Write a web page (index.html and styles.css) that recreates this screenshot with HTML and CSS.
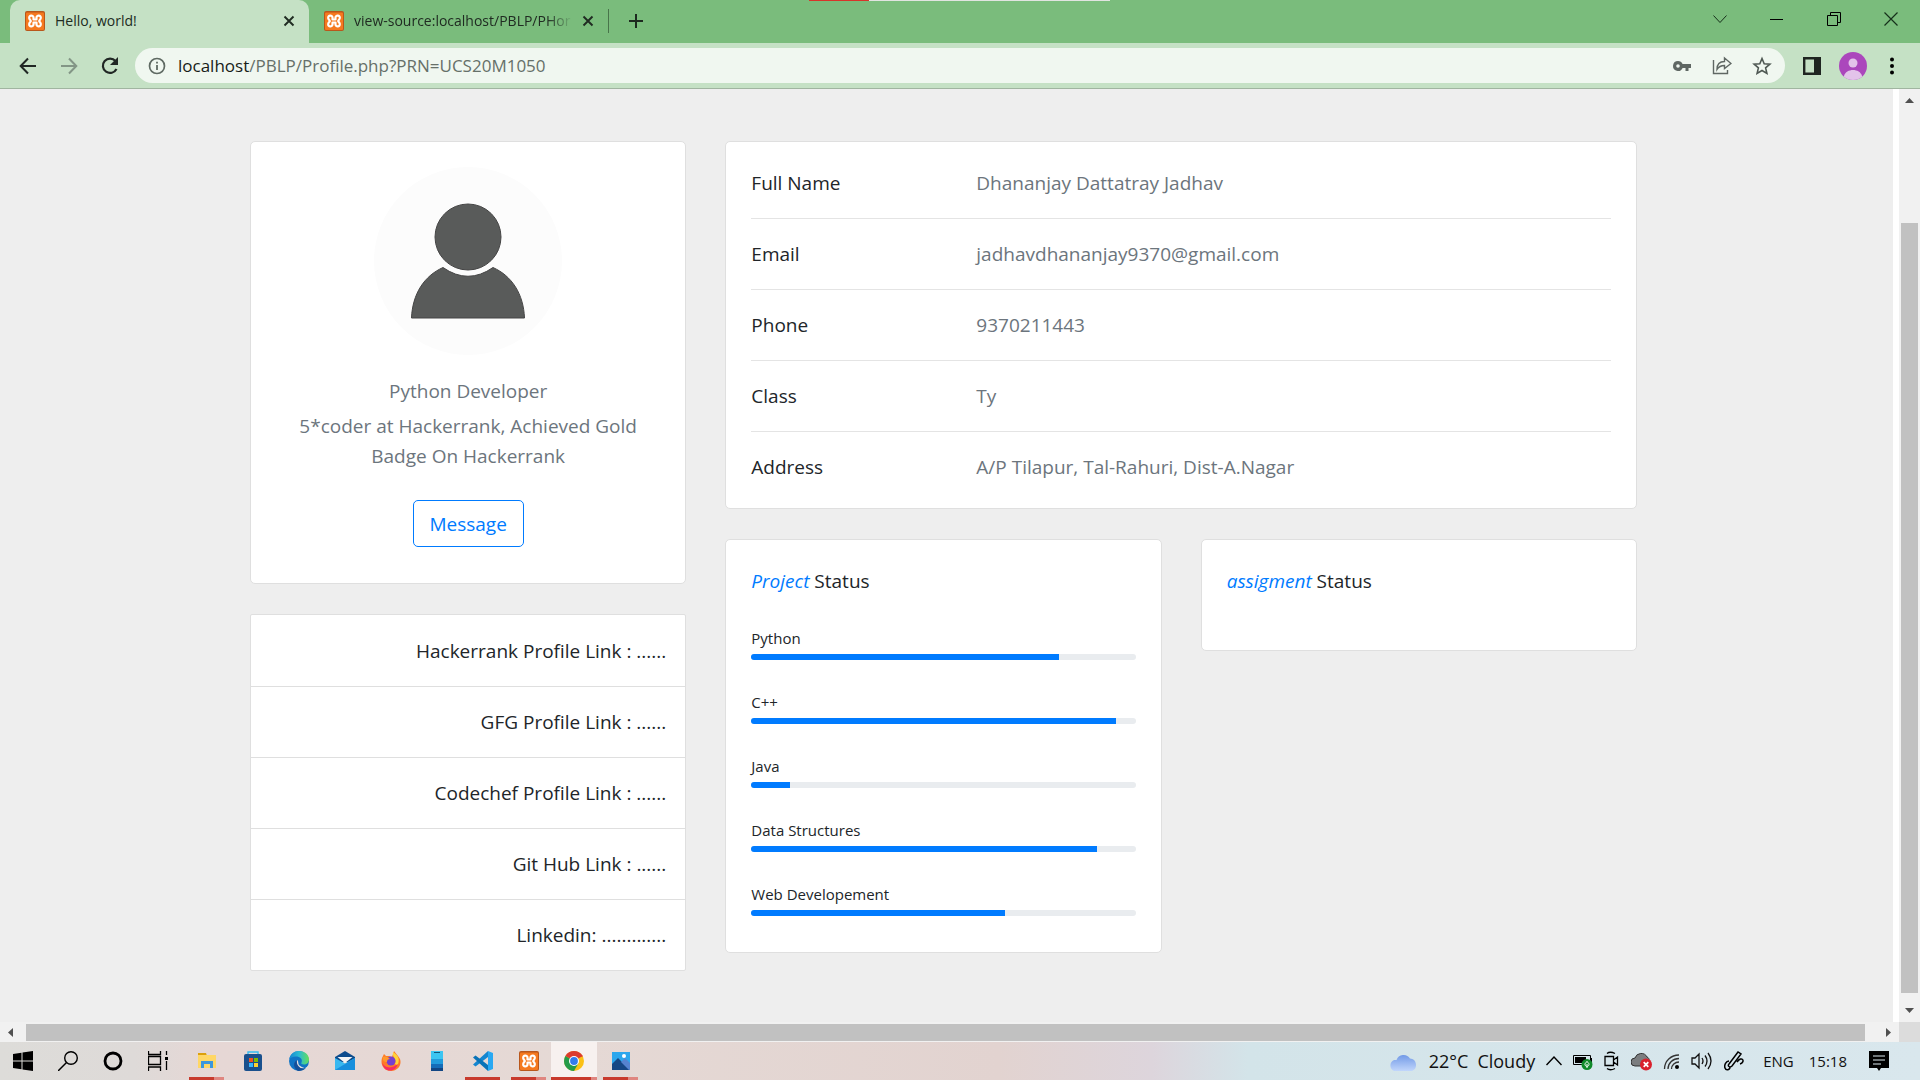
FILE: index.html
```html
<!DOCTYPE html>
<html lang="en">
<head>
<meta charset="utf-8">
<title>Hello, world!</title>
<link rel="stylesheet" href="styles.css">
</head>
<body>
<svg class="defs" aria-hidden="true">
  <symbol id="xampp" viewBox="0 0 20 20">
    <rect width="20" height="20" rx="2" fill="#b9571c"/><rect x="1" y="1.500" width="18" height="17.500" rx="1" fill="#f5791f"/>
    <path d="M8.500 8.500V6.500C8.500 3.800 3.800 4 4.200 7C4.400 8.800 5.800 9 5.800 10S4.400 11.200 4.200 13C3.800 16 8.500 16.200 8.500 13.500V11.500H11.500V13.500C11.500 16.200 16.200 16 15.800 13C15.600 11.200 14.200 11 14.200 10S15.600 8.800 15.800 7C16.200 4 11.500 3.800 11.500 6.500V8.500Z" fill="none" stroke="#fff" stroke-width="2.200" stroke-linejoin="round"/>
  </symbol>
  <symbol id="cross" viewBox="0 0 12 12"><path d="M1.500 1.500l9 9M10.500 1.500l-9 9" stroke="#202b22" stroke-width="1.900"/></symbol>
</svg>
<div class="screen">
  <header class="browser">
    <div class="tabs">
      <div class="tab active">
        <svg class="favicon"><use href="#xampp"/></svg>
        <span class="tab-title">Hello, world!</span>
        <button class="close" aria-label="Close tab"><svg width="12" height="12"><use href="#cross"/></svg></button>
      </div>
      <div class="tab">
        <svg class="favicon"><use href="#xampp"/></svg>
        <span class="tab-title fade">view-source:localhost/PBLP/PHor</span>
        <button class="close" aria-label="Close tab"><svg width="12" height="12"><use href="#cross"/></svg></button>
      </div>
      <button class="new-tab" aria-label="New tab"><svg width="16" height="16"><path d="M8 1v14M1 8h14" stroke="#1d2a1f" stroke-width="2"/></svg></button>
      <div class="window-controls">
        <button aria-label="Search tabs"><svg width="14" height="14"><path d="M.5 3.500l6.500 7 6.500-7" fill="none" stroke="#16301a"/></svg></button>
        <button aria-label="Minimize"><svg width="14" height="14"><path d="M0 7.500h13" stroke="#000"/></svg></button>
        <button aria-label="Restore"><svg width="14" height="14"><path d="M.5 3.500h10v10H.500zM3.500 3V.500H13.500v10H11" fill="none" stroke="#000"/></svg></button>
        <button aria-label="Close"><svg width="14" height="14"><path d="M.5.500l13 13M13.500.500l-13 13" stroke="#16301a" stroke-width="1.200"/></svg></button>
      </div>
      <div class="load-line"></div>
    </div>
    <div class="toolbar">
      <div class="nav">
        <button aria-label="Back"><svg width="18" height="18"><path d="M17 9H2M9 1.500L1.700 9 9 16.500" fill="none" stroke="#202724" stroke-width="2"/></svg></button>
        <button aria-label="Forward"><svg width="18" height="18"><path d="M1 9h15M9 1.500L16.300 9 9 16.500" fill="none" stroke="#839686" stroke-width="2"/></svg></button>
        <button aria-label="Reload"><svg width="20" height="20"><path d="M16.500 13A7.200 7.200 0 1 1 15.500 5" fill="none" stroke="#202724" stroke-width="2.200"/><path d="M18 1v8h-8z" fill="#202724"/></svg></button>
      </div>
      <div class="address">
        <svg width="18" height="18"><circle cx="9" cy="9" r="7.500" fill="none" stroke="#5f6a63" stroke-width="1.700"/><path d="M9 8v5M9 4.700v1.800" stroke="#5f6a63" stroke-width="1.800"/></svg>
        <span class="url"><b>localhost</b>/PBLP/Profile.php?PRN=UCS20M1050</span>
        <button aria-label="Passwords"><svg width="20" height="20" viewBox="0 0 20 20"><path d="M6 5a5 5 0 1 0 4.600 7H13.500v3h3v-3H19V8H10.600A5 5 0 0 0 6 5zm0 3.200a1.800 1.800 0 1 1 0 3.600 1.800 1.800 0 0 1 0-3.600z" fill="#5f6763" fill-rule="evenodd"/></svg></button>
        <button aria-label="Share"><svg width="20" height="20" viewBox="0 0 20 20"><path d="M1.500 4v13.500h14V14M5 13.500C5 8 8 5.500 12.500 5.500V2L19 7.500 12.500 12.500V9.500C9 9.500 6.500 11 5 13.500z" fill="none" stroke="#5f6763" stroke-width="1.400"/></svg></button>
        <button aria-label="Bookmark"><svg width="20" height="20" viewBox="0 0 20 20"><path d="M10 2.500l2.200 5.200 5.700.5-4.300 3.700 1.300 5.500L10 14.500l-4.900 2.900 1.300-5.500L2.100 8.200l5.700-.5z" fill="none" stroke="#4f5853" stroke-width="1.600"/></svg></button>
      </div>
      <button class="tool" aria-label="Side panel"><svg width="18" height="18"><path d="M1.200 1.200h15.600v15.600H1.200z" fill="none" stroke="#1f2521" stroke-width="2.400"/><path d="M11 1h6v16h-6z" fill="#1f2521"/></svg></button>
      <button class="tool account" aria-label="Account"><svg width="28" height="28"><clipPath id="round"><circle cx="14" cy="14" r="14"/></clipPath><g clip-path="url(#round)"><path d="M0 0h28v28H0z" fill="#ab47bc"/><circle cx="14" cy="11" r="4.500" fill="#e3c3ea"/><path d="M5 28v-4c1-4 5-6 9-6s8 2 9 6v4z" fill="#e3c3ea"/></g></svg></button>
      <button class="tool" aria-label="Menu"><svg width="4" height="18"><circle cx="2" cy="2.500" r="2"/><circle cx="2" cy="9" r="2"/><circle cx="2" cy="15.500" r="2"/></svg></button>
    </div>
  </header>

  <div class="viewport">
    <main class="page">
      <div class="profile-grid">
        <div class="column">
          <section class="card profile">
            <svg class="avatar" viewBox="0 0 188 188" role="img" aria-label="Profile picture"><circle cx="94" cy="94" r="94" fill="#fcfcfc"/><g fill="#595b5a" stroke="#454545"><circle cx="94" cy="70" r="33"/><path d="M37.500 151C38.500 127 50 109 69 100.500Q94 118 119 100.500C138 109 149.500 127 150.500 151z"/></g></svg>
            <p class="role">Python Developer</p>
            <p class="bio">5*coder at Hackerrank, Achieved Gold Badge On Hackerrank</p>
            <button class="message">Message</button>
          </section>
          <ul class="card links">
            <li>Hackerrank Profile Link : ......</li>
            <li>GFG Profile Link : ......</li>
            <li>Codechef Profile Link : ......</li>
            <li>Git Hub Link : ......</li>
            <li>Linkedin: .............</li>
          </ul>
        </div>
        <div class="column wide">
          <dl class="card details">
            <div><dt>Full Name</dt><dd>Dhananjay Dattatray Jadhav</dd></div>
            <div><dt>Email</dt><dd>jadhavdhananjay9370@gmail.com</dd></div>
            <div><dt>Phone</dt><dd>9370211443</dd></div>
            <div><dt>Class</dt><dd>Ty</dd></div>
            <div><dt>Address</dt><dd>A/P Tilapur, Tal-Rahuri, Dist-A.Nagar</dd></div>
          </dl>
          <div class="status-row">
            <section class="card status">
              <h2><i>Project</i> Status</h2>
              <div class="skill"><span>Python</span><div class="bar"><div style="width:80%"></div></div></div>
              <div class="skill"><span>C++</span><div class="bar"><div style="width:95%"></div></div></div>
              <div class="skill"><span>Java</span><div class="bar"><div style="width:10%"></div></div></div>
              <div class="skill"><span>Data Structures</span><div class="bar"><div style="width:90%"></div></div></div>
              <div class="skill"><span>Web Developement</span><div class="bar"><div style="width:66%"></div></div></div>
            </section>
            <section class="card status">
              <h2><i>assigment</i> Status</h2>
            </section>
          </div>
        </div>
      </div>
    </main>
    <div class="scroll vertical">
      <svg width="9" height="5"><path d="M0 5L4.500 0 9 5z" fill="#505050"/></svg>
      <div class="thumb"></div>
      <svg width="9" height="5"><path d="M0 0l4.500 5L9 0z" fill="#505050"/></svg>
    </div>
    <div class="scroll horizontal">
      <svg width="5" height="9"><path d="M5 0L0 4.500 5 9z" fill="#505050"/></svg>
      <div class="thumb"></div>
      <svg width="5" height="9"><path d="M0 0l5 4.500L0 9z" fill="#505050"/></svg>
    </div>
    <div class="corner"></div>
  </div>

  <footer class="taskbar">
    <div class="system">
      <button aria-label="Start"><svg width="20" height="20"><path d="M0 3l8.500-1.300v7.800H0zM9.500 1.500L20 0v9.500H9.500zM0 10.500h8.500v7.800L0 17zM9.500 10.500H20V20L9.500 18.500z"/></svg></button>
      <button aria-label="Search"><svg width="20" height="20"><circle cx="13" cy="7" r="6.300" fill="none" stroke="#000" stroke-width="1.400"/><path d="M8.500 11.500L0 20" stroke="#000" stroke-width="1.500"/></svg></button>
      <button aria-label="Cortana"><svg width="20" height="20"><circle cx="10" cy="10" r="8" fill="none" stroke="#000" stroke-width="2.800"/></svg></button>
      <button aria-label="Task view"><svg width="20" height="20"><path d="M.5 0v3.500h12V0M.500 5.500h12v8H.500zM.500 20v-4h12v4M18.500 0v4M18.500 10v9" fill="none" stroke="#000" stroke-width="1.300"/><path d="M17 6h3v3h-3z"/></svg></button>
    </div>
    <div class="apps">
      <button class="running stacked" aria-label="File Explorer"><svg width="20" height="20"><path d="M1 2h8l1 3H1z" fill="#dca00c"/><path d="M1 4h18v13H1z" fill="#ffd766"/><path d="M4 17v-7h12v7h-3v-4H7v4z" fill="#3d97dd"/></svg></button>
      <button aria-label="Store"><svg width="20" height="20"><path d="M5 4V1h10v3" fill="none" stroke="#35bdf2" stroke-width="1.400"/><rect x="1" y="3" width="18" height="17" rx="2" fill="#19508d"/><path d="M6 7h4v4H6z" fill="#f25022"/><path d="M11 7h4v4h-4z" fill="#7fba00"/><path d="M6 12h4v4H6z" fill="#38b6ff"/><path d="M11 12h4v4h-4z" fill="#ffd12e"/></svg></button>
      <button aria-label="Edge"><svg width="20" height="20" viewBox="0 0 20 20"><defs><linearGradient id="sea"><stop stop-color="#1684d2"/><stop offset=".5" stop-color="#2bbbd2"/><stop offset="1" stop-color="#64df5a"/></linearGradient></defs><circle cx="10" cy="10" r="10" fill="#1174c5"/><path d="M0 9C1 3 5 0 10 0c6 0 10 4 10 8.500 0 3-2.500 5-5 5-2 0-3.500-.8-2.500-2C14 8 11 5.500 7 5.500 3.500 5.500 1 7 0 9z" fill="url(#sea)"/><path d="M8 9c-2 4 1 9 6 8.500 2-.2 3.500-1 4.500-2 .8.600 0 1.500-1 2.500C14 16.500 10 15 9.500 13 9 11 9.500 10 8 9z" fill="#e6dfde"/><path d="M8 9c-4 2-4 8 1 11 3 0 6-1 8-3C12 19 7 15 8 9z" fill="#154f99"/></svg></button>
      <button aria-label="Mail"><svg width="20" height="20"><path d="M0 6l10-6 10 6v5H0z" fill="#0d4c8d"/><path d="M0 7l10 5.500L20 7v12H0z" fill="#39b8f0"/><path d="M0 19L20 7v12z" fill="#188fdd"/><path d="M2.500 6h15L10 12z" fill="#f5f5f5"/></svg></button>
      <button aria-label="Firefox"><svg width="20" height="20" viewBox="0 0 20 20"><path d="M1 7l2-4 2 2 3 0 3 1 2-6 4 5 2 3c2 6-2 12-9 12S-1 14 1 7z" fill="#ff7a27"/><path d="M1 11c2 7 12 7 16 1-1 5-4 7.500-8 7.500S2 17 1 11z" fill="#f52c64"/><path d="M12 1c5 3 7 7 5 12-1 1-2 1-3 0 2-5-3-6-2-12z" fill="#ffd339"/><circle cx="10" cy="10" r="4.500" fill="#7540cf"/><path d="M2 6c3-1 5 0 7 2-2 0-3 1-3 3C3 11 1 9 2 6z" fill="#ff982c"/></svg></button>
      <button aria-label="Your Phone"><svg width="12" height="20"><path d="M0 0h12v20H0z" fill="#3cc5f2"/><path d="M0 8h12v5H0z" fill="#229bdc"/><path d="M0 13h12v4H0z" fill="#156cb8"/><path d="M0 17h12v3H0z" fill="#124684"/><path d="M3 1.500h6" stroke="#11577e"/></svg></button>
      <button class="running" aria-label="Visual Studio Code"><svg width="20" height="20" viewBox="0 0 20 20"><path d="M15 0l5 2v16l-5 2z" fill="#29a8f2"/><path d="M15 0v6L2.500 15.500 0 13.500z" fill="#1486d0"/><path d="M15 20v-6L2.500 4.500 0 6.500z" fill="#0873b8"/></svg></button>
      <button class="running stacked" aria-label="XAMPP"><svg width="20" height="20"><use href="#xampp"/></svg></button>
      <button class="running stacked current" aria-label="Chrome"><svg width="20" height="20" viewBox="0 0 20 20"><circle cx="10" cy="10" r="10" fill="#fbc116"/><path d="M10 10L1.340 5A10 10 0 0 1 18.660 5z" fill="#dc3b2e"/><path d="M1.340 5A10 10 0 0 0 10 20l4.300-7.500L10 10z" fill="#249b49"/><path d="M9 5.500h9.900L18 4H9z" fill="#dc3b2e"/><circle cx="10" cy="10" r="5" fill="#fff"/><circle cx="10" cy="10" r="3.900" fill="#327cec"/></svg></button>
      <button class="running stacked" aria-label="Photos"><svg width="20" height="20"><path d="M1 1h18v18H1z" fill="#2ba7ed"/><path d="M1 13l6-6 12 12H1z" fill="#164784"/><path d="M10 11l4-4 5 5v7h-1z" fill="#5683cf"/><circle cx="13" cy="5" r="2" fill="#fff"/></svg></button>
    </div>
    <div class="tray">
      <svg width="30" height="20" viewBox="0 0 30 20"><defs><linearGradient id="sky" x2="0" y2="1"><stop stop-color="#729ae7"/><stop offset="1" stop-color="#c1d6fb"/></linearGradient></defs><path d="M6 20a6 6 0 0 1 0-11C7 9 8 9 8.500 9A7.500 7.500 0 0 1 22 7.500 6.500 6.500 0 0 1 24 20z" fill="url(#sky)"/></svg>
      <span class="weather">22°C&ensp;Cloudy</span>
      <svg width="16" height="10"><path d="M.5 9L8 1l7.500 8" fill="none" stroke="#000" stroke-width="1.400"/></svg>
      <svg width="20" height="20"><path d="M.5 4.500h17v9H.500z" fill="none" stroke="#000"/><path d="M2 6h11v6H2zM18 7h1v4h-1z"/><circle cx="14" cy="13.500" r="5.500" fill="#118a2a"/><path d="M14 10.500c-4 3-1 5 0 5s4-2 0-5zM14 13v4" fill="none" stroke="#fff"/></svg>
      <svg width="16" height="20"><path d="M1 5.500h8.500v9H1zM9.500 9l4-3v8l-4-3M3 2.500q3-2.500 8 0M3 17.500q3 2.500 8 0" fill="none" stroke="#000" stroke-width="1.300"/></svg>
      <svg width="21" height="20"><path d="M4 15a4 4 0 0 1 0-8 6.500 6.500 0 0 1 12-1c3 1 3 6 0 9z" fill="#7b7d7f" stroke="#333"/><circle cx="15" cy="13.500" r="6" fill="#d9202c"/><path d="M12.700 11.200l4.600 4.600m0-4.600l-4.600 4.600" stroke="#fff" stroke-width="1.700"/></svg>
      <svg width="17" height="17"><path d="M1.500 16C1.500 8 8 2 16 2M5 16C5 10 10 5.500 16 5.500M8.500 16C8.500 12 12 9 16 9" fill="none" stroke="#333" stroke-width="1.300"/><circle cx="14" cy="14" r="2"/></svg>
      <svg width="22" height="18"><path d="M1 6h3l4-4v14l-4-4H1zM11 6q2 3 0 6M14 3.500q4 5.500 0 11M17 1q6 8 0 16" fill="none" stroke="#111" stroke-width="1.300"/></svg>
      <svg width="20" height="20"><path d="M5 10c-3 0-5 4-4 7 1 3 5 2 5-1M5 13l9-12 3 2-9 12c-2 2-5 0-3-2zM13 11c5-7 9 0 3 2" fill="none" stroke="#000" stroke-width="1.500"/></svg>
      <span class="lang">ENG</span>
      <time>15:18</time>
      <svg width="20" height="20"><path d="M0 0h20v17h-8l-2 3-2-3H0z"/><path d="M4 5h12M4 9h12M4 13h8" stroke="#dceaf0"/></svg>
    </div>
  </footer>
</div>
</body>
</html>
```
FILE: styles.css
```css
* { box-sizing: border-box; }
body { margin: 0; font-family: "Open Sans", "Noto Sans", sans-serif; color: #212529; }
button { border: 0; padding: 0; background: none; font: inherit; color: inherit; display: flex; align-items: center; justify-content: center; }
svg { display: block; flex: none; }
.defs { position: absolute; width: 0; height: 0; }
.screen { height: 100vh; display: flex; flex-direction: column; overflow: hidden; }

/* Browser frame */
.browser { flex: none; background: #c5e1c5; border-bottom: 1px solid #a0b5a0; }
.tabs { position: relative; display: flex; height: 43px; padding-left: 10px; background: #7abc7c; }
.tab { display: flex; align-items: center; width: 299px; height: 43px; padding: 0 14px 2px 15px; font-size: 14px; }
.tab.active { background: #c5e1c5; border-radius: 10px 10px 0 0; }
.tab .close { width: 12px; height: 12px; }
.favicon { width: 20px; height: 20px; margin-right: 10px; }
.tab-title { flex: 1; min-width: 0; overflow: hidden; white-space: nowrap; margin-right: 9px; line-height: 20px; color: #202b22; }
.tab-title.fade { mask-image: linear-gradient(90deg, #000 88%, transparent); }
.new-tab { width: 54px; height: 24px; margin-top: 9px; border-left: 1px solid #48744a; }
.window-controls { display: flex; height: 37px; margin: 0 1px 0 auto; }
.window-controls button { width: 57px; }
.load-line { position: absolute; top: 0; left: 809px; width: 301px; height: 1px; background: linear-gradient(90deg, #d8342a 60px, #e1e4e1 60px); }
.toolbar { display: flex; align-items: center; height: 45px; padding: 0 26px 0 7px; }
.nav { display: flex; width: 128px; }
.nav button { width: 41px; }
.address { flex: 1; display: flex; align-items: center; gap: 20px; height: 35px; margin-right: 18px; padding: 0 13px; border-radius: 18px; background: #f0f7f0; }
.url { flex: 1; margin-left: -8px; font-size: 17px; color: #667069; }
.url b { font-weight: 400; color: #171c18; }
.tool { margin-right: 18px; }
.tool.account { margin-right: 23px; }
.tool:last-child { margin-right: 0; }

/* Web page */
.viewport { flex: 1; min-height: 0; display: grid; grid-template: minmax(0, 1fr) 20px / minmax(0, 1fr) 21px; }
.page { overflow: hidden; padding: 52px 6px 0 0; background: #eee; border-right: 6px solid #fff; font-size: 19px; line-height: 30px; }
.profile-grid { display: grid; grid-template-columns: repeat(3, minmax(0, 1fr)); gap: 39px; align-items: start; max-width: 1387px; margin: 0 auto; }
.column { display: grid; gap: 30px; }
.wide { grid-column: span 2; }
.card { margin: 0; background: #fff; border: 1px solid #dfdfdf; border-radius: 5px; }
.profile { display: flex; flex-direction: column; align-items: center; padding: 25px 25px 36px; text-align: center; color: #6c757d; }
.profile p { margin: 0; }
.avatar { width: 188px; height: 188px; margin-bottom: 21px; }
.profile .role { margin-bottom: 5px; }
.message { width: 111px; height: 47px; margin-top: 29px; border: 1px solid #007bff; border-radius: 5px; color: #007bff; }
.links { padding: 1px 0 0; list-style: none; text-align: right; border-radius: 2px; }
.links li { padding: 20px 19px; border-bottom: 1px solid #dfdfdf; }
.links li:last-child { border-bottom: 0; }
.details { padding: 6px 25px; }
.details div { display: flex; padding: 20px 0; border-bottom: 1px solid #e4e4e4; }
.details div:last-child { border-bottom: 0; }
.details dt { flex: 0 0 225px; }
.details dd { margin: 0; color: #6c757d; }
.status-row { display: grid; grid-template-columns: 1fr 1fr; gap: 39px; align-items: start; }
.status { display: grid; gap: 30px; padding: 26px 25px 36px; }
.status h2 { margin: 0; font-size: 19px; font-weight: 400; line-height: 30px; }
.status h2:last-child { margin-bottom: 18px; }
.status i { color: #007bff; }
.skill { display: grid; gap: 4px; font-size: 15px; line-height: 24px; }
.bar { height: 6px; overflow: hidden; border-radius: 4px; background: #e9ecef; }
.bar div { height: 100%; background: #007bff; }

.scroll { display: flex; align-items: center; background: #f1f1f1; }
.thumb { background: #c1c1c1; }
.vertical { flex-direction: column; padding: 9px 2px; }
.vertical .thumb { width: 17px; height: 770px; margin: auto 0 15px; }
.horizontal { padding: 2px 8px; }
.horizontal .thumb { flex: 1; height: 17px; margin: 0 21px 0 13px; }
.corner { background: #dcdcdc; }

/* Taskbar */
.taskbar { flex: none; display: flex; align-items: stretch; height: 38px; padding-right: 31px; background: linear-gradient(90deg, #dddcd9 0, #dedad8 7%, #e6d7d5 11%, #e5d9d5 30%, #e2d3d0 52%, #ddd5dc 60%, #d3e4e9 65%, #d9e7ed); }
.system, .apps { display: flex; }
.system button { width: 45px; }
.apps { margin-left: 3px; }
.apps button { width: 46px; border: solid transparent; border-width: 0 5px 0 6px; background-clip: padding-box; }
.apps .running { background-image: linear-gradient(#c83a2d, #c83a2d); background-repeat: no-repeat; background-position: 0 100%; background-size: 100% 3px; }
.apps .stacked { background-image: linear-gradient(90deg, #c83a2d 72%, #df8680 72%); }
.apps .current { border-width: 0; background-color: #f7f1ef; background-image: linear-gradient(90deg, #c83a2d 88%, #df8680 88%); }
.tray { display: flex; align-items: center; gap: 11px; margin-left: auto; color: #111; }
.weather { font-size: 18px; }
.lang, time { font-size: 15px; }
.lang { margin-left: 8px; }
time { margin: 0 11px 0 4px; }
```
